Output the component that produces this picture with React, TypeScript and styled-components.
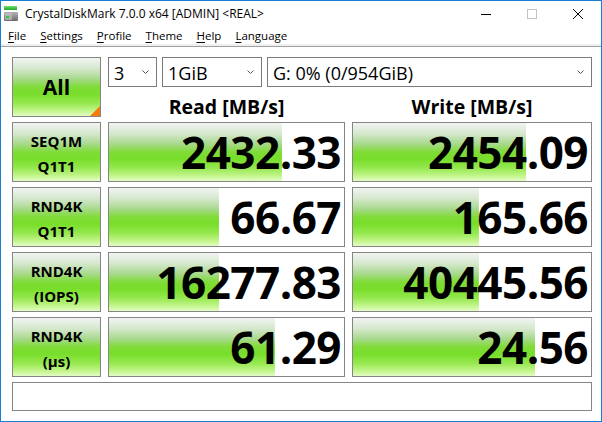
import React from 'react';
import styled, { createGlobalStyle } from 'styled-components';

const GlobalStyle = createGlobalStyle`
  html, body { margin: 0; padding: 0; background: #ffffff; }
  body {
    font-family: "Open Sans", "Liberation Sans", sans-serif;
    overflow: hidden;
    color: #000;
  }
  * { box-sizing: border-box; }
`;

const greenGradient = `linear-gradient(to bottom,
  #f2f4f2 0%, #d6e8ce 18%, #a8d98c 36%, #80dc38 50%,
  #78de2a 62%, #96e850 78%, #c6f690 92%, #e2fcc6 100%)`;

const Window = styled.div`
  width: 602px;
  height: 422px;
  border: 1px solid #1a7fd4;
  background: #ffffff;
  display: flex;
  flex-direction: column;
`;

const TitleBar = styled.div`
  height: 25px;
  flex: none;
  display: flex;
  align-items: center;
`;

const AppIcon = styled.svg`
  flex: none;
  margin-left: 3px;
`;

const Title = styled.div`
  flex: 1;
  margin-left: 7px;
  font-size: 12px;
  white-space: nowrap;
`;

const CaptionButton = styled.div`
  width: 46px;
  height: 25px;
  display: flex;
  align-items: center;
  justify-content: center;
`;

const MenuBar = styled.div`
  height: 18px;
  flex: none;
  display: flex;
  align-items: center;
  gap: 14px;
  padding-left: 7px;
  font-size: 11.5px;
`;

const MenuItem = styled.span`
  white-space: nowrap;
  u { text-underline-offset: 2px; }
`;

const MenuRule = styled.div`
  height: 3px;
  flex: none;
  border-top: 2px solid #efefef;
  border-bottom: 1px solid #a0a0a0;
`;

const Board = styled.div`
  flex: 1;
  padding: 10px 9px 0 11px;
  display: grid;
  grid-template-columns: 89px 237px 240px;
  grid-template-rows: 60px 60px 60px 60px 60px 29px;
  column-gap: 7px;
  row-gap: 5px;
`;

const AllButton = styled.div`
  position: relative;
  border: 1px solid #858585;
  background: ${greenGradient};
  display: flex;
  align-items: center;
  justify-content: center;
  font-size: 21px;
  font-weight: 700;

  &::after {
    content: "";
    position: absolute;
    right: 0;
    bottom: 0;
    width: 10px;
    height: 10px;
    background: #f77a0c;
    clip-path: polygon(100% 0, 100% 100%, 0 100%);
  }
`;

const TopPanel = styled.div`
  grid-column: 2 / 4;
  display: flex;
  flex-direction: column;
`;

const SelectRow = styled.div`
  height: 30px;
  display: flex;
  gap: 5px;
`;

const Select = styled.div<{ $w?: number }>`
  ${p => (p.$w ? `width: ${p.$w}px; flex: none;` : 'flex: 1;')}
  height: 30px;
  border: 1px solid #7a7a7a;
  background: #fff;
  display: flex;
  align-items: center;
  padding: 0 7px 0 5px;
  font-size: 18px;
  white-space: nowrap;
`;

const SelectText = styled.span`
  flex: 1;
  padding-top: 1px;
`;

const HeaderRow = styled.div`
  height: 30px;
  display: grid;
  grid-template-columns: 237px 240px;
  column-gap: 7px;
`;

const Header = styled.div`
  text-align: center;
  font-size: 19.5px;
  font-weight: 700;
  line-height: 18px;
  padding-top: 11px;
  white-space: nowrap;
`;

const TestButton = styled.div`
  border: 1px solid #858585;
  background: ${greenGradient};
  display: flex;
  flex-direction: column;
  align-items: center;
  justify-content: center;
  padding-top: 3px;
  font-size: 15px;
  font-weight: 700;
  line-height: 25px;
`;

const Meter = styled.div`
  border: 1px solid #858585;
  background-color: #ffffff;
  background-image: ${greenGradient};
  background-repeat: no-repeat;
  display: flex;
  align-items: center;
  justify-content: flex-end;
  padding-right: 3px;
  font-size: 44px;
  font-weight: 700;
  line-height: 44px;
  letter-spacing: -0.5px;
  white-space: nowrap;
`;

const StatusBar = styled.div`
  grid-column: 1 / 4;
  border: 1px solid #858585;
  background: #ffffff;
`;

const Chevron = () => (
  <svg width="7" height="4" viewBox="0 0 7 4">
    <polyline points="0.5,0.5 3.5,3.5 6.5,0.5" fill="none" stroke="#555" strokeWidth="1" />
  </svg>
);

const DriveIcon = () => (
  <AppIcon width="14" height="16" viewBox="0 0 14 16">
    <defs>
      <linearGradient id="ledbar" x1="0" y1="0" x2="0" y2="1">
        <stop offset="0" stopColor="#6fe06f" />
        <stop offset="1" stopColor="#1fa82a" />
      </linearGradient>
      <linearGradient id="case" x1="0" y1="0" x2="0" y2="1">
        <stop offset="0" stopColor="#b4b4b4" />
        <stop offset="1" stopColor="#6a6a6a" />
      </linearGradient>
    </defs>
    <rect x="0" y="0" width="13" height="4" fill="url(#ledbar)" />
    <rect x="0" y="6" width="14" height="9" rx="1" fill="url(#case)" />
    <rect x="1" y="7" width="7" height="7" fill="#c8c8c8" opacity="0.6" />
    <rect x="2" y="10" width="3" height="2" fill="#2fcf3f" />
  </AppIcon>
);

type Result = {
  name: string;
  unit: string;
  read: string;
  readFill: number;
  write: string;
  writeFill: number;
};

const results: Result[] = [
  { name: 'SEQ1M', unit: 'Q1T1', read: '2432.33', readFill: 73.6, write: '2454.09', writeFill: 72.7 },
  { name: 'RND4K', unit: 'Q1T1', read: '66.67', readFill: 46.8, write: '165.66', writeFill: 52.9 },
  { name: 'RND4K', unit: '(IOPS)', read: '16277.83', readFill: 46.8, write: '40445.56', writeFill: 52.9 },
  { name: 'RND4K', unit: '(μs)', read: '61.29', readFill: 70.6, write: '24.56', writeFill: 76.5 },
];

const menus = ['File', 'Settings', 'Profile', 'Theme', 'Help', 'Language'];

export default function App() {
  return (
    <>
      <GlobalStyle />
      <Window>
        <TitleBar>
          <DriveIcon />
          <Title>CrystalDiskMark 7.0.0 x64 [ADMIN] &lt;REAL&gt;</Title>
          <CaptionButton>
            <svg width="10" height="10" viewBox="0 0 10 10">
              <line x1="0" y1="5.5" x2="10" y2="5.5" stroke="#000" strokeWidth="1" />
            </svg>
          </CaptionButton>
          <CaptionButton>
            <svg width="10" height="10" viewBox="0 0 10 10">
              <rect x="0.5" y="0.5" width="9" height="9" fill="none" stroke="#c4c4c4" strokeWidth="1" />
            </svg>
          </CaptionButton>
          <CaptionButton>
            <svg width="10" height="10" viewBox="0 0 10 10">
              <path d="M0 0 L10 10 M10 0 L0 10" stroke="#000" strokeWidth="1" />
            </svg>
          </CaptionButton>
        </TitleBar>
        <MenuBar>
          {menus.map(m => (
            <MenuItem key={m}>
              <u>{m[0]}</u>
              {m.slice(1)}
            </MenuItem>
          ))}
        </MenuBar>
        <MenuRule />
        <Board>
          <AllButton>All</AllButton>
          <TopPanel>
            <SelectRow>
              <Select $w={49}>
                <SelectText>3</SelectText>
                <Chevron />
              </Select>
              <Select $w={100}>
                <SelectText>1GiB</SelectText>
                <Chevron />
              </Select>
              <Select>
                <SelectText>G: 0% (0/954GiB)</SelectText>
                <Chevron />
              </Select>
            </SelectRow>
            <HeaderRow>
              <Header>Read [MB/s]</Header>
              <Header>Write [MB/s]</Header>
            </HeaderRow>
          </TopPanel>
          {results.map((r, i) => (
            <React.Fragment key={i}>
              <TestButton>
                <span>{r.name}</span>
                <span>{r.unit}</span>
              </TestButton>
              <Meter style={{ backgroundSize: `${r.readFill}% 100%` }}>{r.read}</Meter>
              <Meter style={{ backgroundSize: `${r.writeFill}% 100%` }}>{r.write}</Meter>
            </React.Fragment>
          ))}
          <StatusBar />
        </Board>
      </Window>
    </>
  );
}
